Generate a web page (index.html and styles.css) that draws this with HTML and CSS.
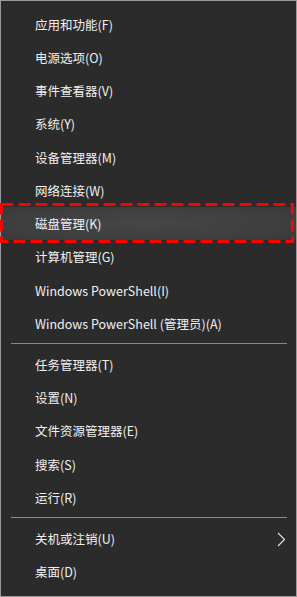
FILE: index.html
```html
<!DOCTYPE html>
<html lang="zh-CN">
<head>
<meta charset="utf-8">
<link rel="stylesheet" href="styles.css">
</head>
<body>
<div class="menu">
  <div class="item">应用和功能(F)</div>
  <div class="item">电源选项(O)</div>
  <div class="item">事件查看器(V)</div>
  <div class="item">系统(Y)</div>
  <div class="item">设备管理器(M)</div>
  <div class="item">网络连接(W)</div>
  <div class="item active">磁盘管理(K)
    <svg class="mark" width="294" height="40" viewBox="0 0 294 40"><rect x="1.5" y="1.5" width="291" height="37" fill="none" stroke="#ff0000" stroke-width="3" stroke-dasharray="12 5"/></svg>
  </div>
  <div class="item">计算机管理(G)</div>
  <div class="item">Windows PowerShell(I)</div>
  <div class="item">Windows PowerShell (管理员)(A)</div>
  <div class="sep"></div>
  <div class="item">任务管理器(T)</div>
  <div class="item">设置(N)</div>
  <div class="item">文件资源管理器(E)</div>
  <div class="item">搜索(S)</div>
  <div class="item">运行(R)</div>
  <div class="sep"></div>
  <div class="item sub">关机或注销(U)
    <svg class="chev" width="9" height="15" viewBox="0 0 9 15"><path d="M1 1 L7.5 7.5 L1 14" fill="none" stroke="#e0e0e0" stroke-width="1.2"/></svg>
  </div>
  <div class="item">桌面(D)</div>
</div>
</body>
</html>
```
FILE: styles.css
```css
html, body {
  margin: 0;
  padding: 0;
  background: #2b2b2b;
}
.menu {
  box-sizing: border-box;
  width: 297px;
  height: 597px;
  border: 1px solid #9a9a9a;
  background: #2b2b2b;
  padding-top: 6.4px;
  font-family: "Microsoft YaHei", "Noto Sans CJK SC", "Noto Sans", sans-serif;
  font-size: 12.5px;
  color: #f0f0f0;
}
.item {
  position: relative;
  height: 33.25px;
  display: flex;
  align-items: center;
  padding-left: 34px;
  white-space: nowrap;
}
.item.active {
  background: radial-gradient(ellipse at 50% 50%, #464646 0%, #3e3e3e 70%, #3a3a3a 100%);
}
.mark {
  position: absolute;
  left: -1px;
  top: -4px;
}
.sep {
  height: 7.8px;
  display: flex;
  align-items: center;
  padding: 0 9px 0 10px;
}
.sep::before {
  content: "";
  flex: 1;
  height: 1px;
  background: #8a8a8a;
}
.chev {
  position: absolute;
  right: 10px;
  top: 10px;
}
```
